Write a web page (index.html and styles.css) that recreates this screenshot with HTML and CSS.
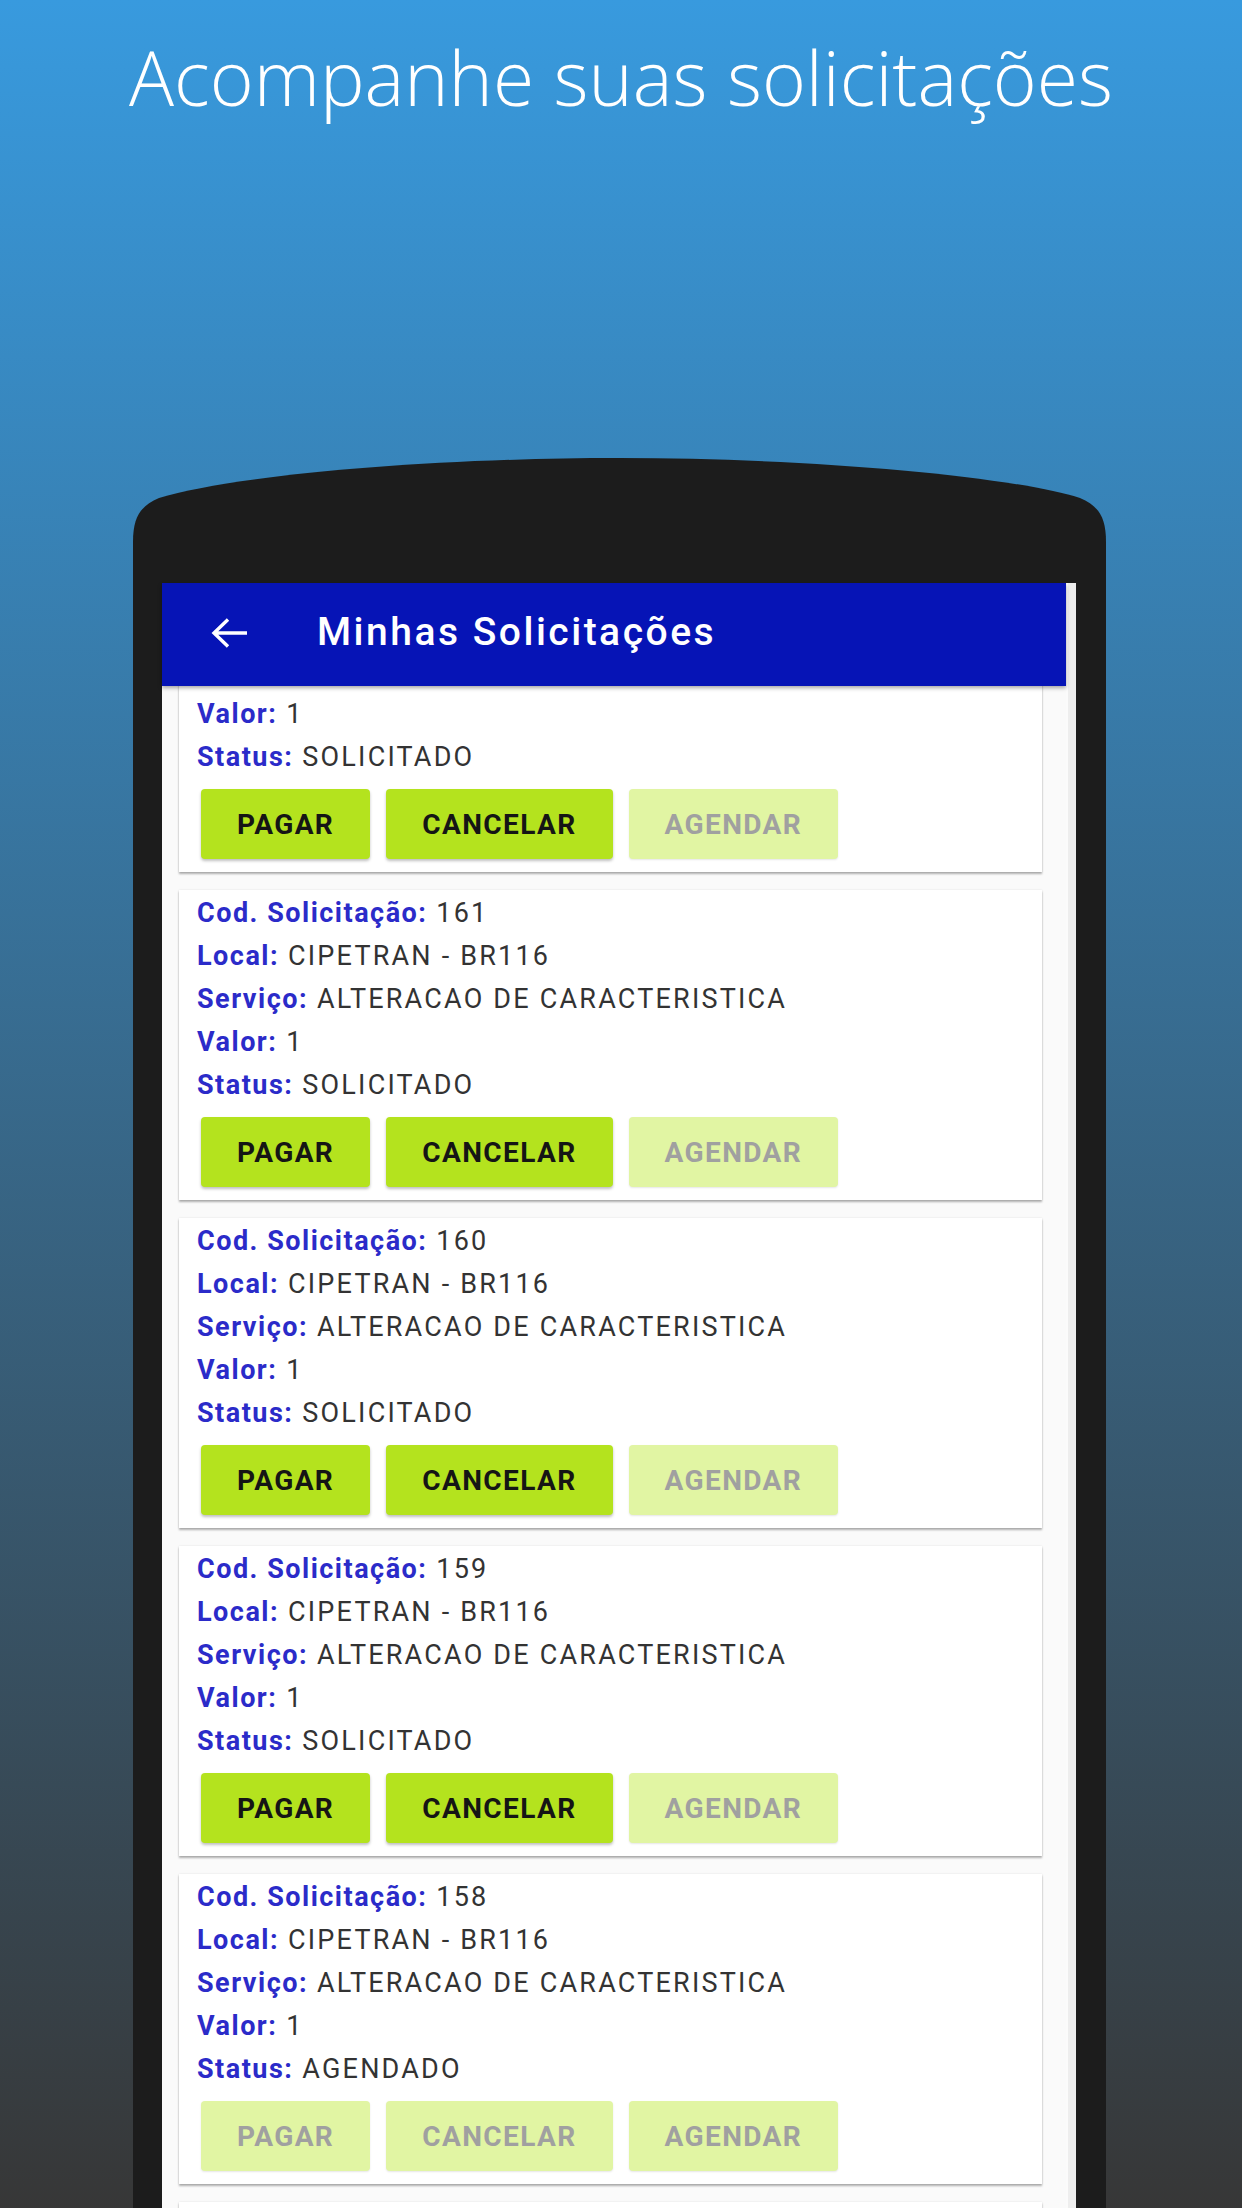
FILE: index.html
```html
<!DOCTYPE html>
<html lang="pt-BR">
<head>
<meta charset="utf-8">
<title>Acompanhe suas solicitações</title>
<link rel="stylesheet" href="styles.css">
</head>
<body>
<header class="hero"><h1 class="hero-title">Acompanhe suas solicitações</h1></header>
<div class="phone">
  <div class="screen">
    <div class="app">
      <div class="appbar">
        <svg class="back" viewBox="0 0 36 30" width="36" height="30"><path d="M3 15H36M17 1.5L3 15L17 28.5" fill="none" stroke="#fff" stroke-width="3.4"/></svg>
        <span class="appbar-title">Minhas Solicitações</span>
      </div>
      <div class="list">
        <div class="list-inner">
          <div class="card">
            <p class="row"><b class="lbl">Cod. Solicitação:</b> 162</p>
            <p class="row"><b class="lbl">Local:</b> CIPETRAN - BR116</p>
            <p class="row"><b class="lbl">Serviço:</b> ALTERACAO DE CARACTERISTICA</p>
            <p class="row"><b class="lbl">Valor:</b> 1</p>
            <p class="row"><b class="lbl">Status:</b> SOLICITADO</p>
            <div class="actions"><span class="btn">PAGAR</span><span class="btn">CANCELAR</span><span class="btn btn-off">AGENDAR</span></div>
          </div>
          <div class="card">
            <p class="row"><b class="lbl">Cod. Solicitação:</b> 161</p>
            <p class="row"><b class="lbl">Local:</b> CIPETRAN - BR116</p>
            <p class="row"><b class="lbl">Serviço:</b> ALTERACAO DE CARACTERISTICA</p>
            <p class="row"><b class="lbl">Valor:</b> 1</p>
            <p class="row"><b class="lbl">Status:</b> SOLICITADO</p>
            <div class="actions"><span class="btn">PAGAR</span><span class="btn">CANCELAR</span><span class="btn btn-off">AGENDAR</span></div>
          </div>
          <div class="card">
            <p class="row"><b class="lbl">Cod. Solicitação:</b> 160</p>
            <p class="row"><b class="lbl">Local:</b> CIPETRAN - BR116</p>
            <p class="row"><b class="lbl">Serviço:</b> ALTERACAO DE CARACTERISTICA</p>
            <p class="row"><b class="lbl">Valor:</b> 1</p>
            <p class="row"><b class="lbl">Status:</b> SOLICITADO</p>
            <div class="actions"><span class="btn">PAGAR</span><span class="btn">CANCELAR</span><span class="btn btn-off">AGENDAR</span></div>
          </div>
          <div class="card">
            <p class="row"><b class="lbl">Cod. Solicitação:</b> 159</p>
            <p class="row"><b class="lbl">Local:</b> CIPETRAN - BR116</p>
            <p class="row"><b class="lbl">Serviço:</b> ALTERACAO DE CARACTERISTICA</p>
            <p class="row"><b class="lbl">Valor:</b> 1</p>
            <p class="row"><b class="lbl">Status:</b> SOLICITADO</p>
            <div class="actions"><span class="btn">PAGAR</span><span class="btn">CANCELAR</span><span class="btn btn-off">AGENDAR</span></div>
          </div>
          <div class="card">
            <p class="row"><b class="lbl">Cod. Solicitação:</b> 158</p>
            <p class="row"><b class="lbl">Local:</b> CIPETRAN - BR116</p>
            <p class="row"><b class="lbl">Serviço:</b> ALTERACAO DE CARACTERISTICA</p>
            <p class="row"><b class="lbl">Valor:</b> 1</p>
            <p class="row"><b class="lbl">Status:</b> AGENDADO</p>
            <div class="actions"><span class="btn btn-off">PAGAR</span><span class="btn btn-off">CANCELAR</span><span class="btn btn-off">AGENDAR</span></div>
          </div>
          <div class="card">
            <p class="row"><b class="lbl">Cod. Solicitação:</b> 157</p>
            <p class="row"><b class="lbl">Local:</b> CIPETRAN - BR116</p>
            <p class="row"><b class="lbl">Serviço:</b> ALTERACAO DE CARACTERISTICA</p>
            <p class="row"><b class="lbl">Valor:</b> 1</p>
            <p class="row"><b class="lbl">Status:</b> AGENDADO</p>
            <div class="actions"><span class="btn btn-off">PAGAR</span><span class="btn btn-off">CANCELAR</span><span class="btn btn-off">AGENDAR</span></div>
          </div>
        </div>
      </div>
    </div>
    <div class="edge"></div>
  </div>
</div>
</body>
</html>
```

FILE: styles.css
```css
html, body {
  margin: 0;
  padding: 0;
}
body {
  width: 1242px;
  height: 2208px;
  overflow: hidden;
  background: linear-gradient(to bottom, #389ade 0%, #373737 100%);
  font-family: Roboto, "Noto Sans", sans-serif;
}
.hero {
  height: 458px;
  box-sizing: border-box;
  padding-top: 26px;
}
.hero-title {
  margin: 0;
  text-align: center;
  font-family: "Open Sans", "Noto Sans", sans-serif;
  font-weight: 300;
  font-size: 75px;
  line-height: 102px;
  color: #ffffff;
  letter-spacing: 0;
}
.phone {
  width: 973px;
  height: 1750px;
  margin-left: 133px;
  box-sizing: border-box;
  padding: 125px 30px 0 29px;
  background: #1c1c1c;
  clip-path: path("M0 84 C0 58 8 48 26 40 C100 17 300 0 486 0 C672 0 873 17 947 40 C965 48 973 58 973 84 L973 1750 L0 1750 Z");
}
.screen {
  height: 100%;
  display: flex;
  background: #eeeeee;
}
.app {
  width: 904px;
  display: flex;
  flex-direction: column;
  background: #fafafa;
  border-right: 2px solid #fbfbfb;
}
.edge {
  flex: 1;
}
.appbar {
  position: relative;
  z-index: 2;
  height: 103px;
  flex: none;
  display: flex;
  align-items: center;
  padding-left: 49px;
  background: #0614b6;
  box-shadow: 0 2px 4px rgba(0, 0, 0, 0.35);
}
.back {
  display: block;
  margin-top: -4px;
}
.appbar-title {
  margin-left: 70px;
  margin-top: -6px;
  color: #ffffff;
  font-weight: 500;
  font-size: 39px;
  letter-spacing: 2.5px;
}
.list {
  flex: 1;
  overflow: hidden;
}
.list-inner {
  margin-top: -124px;
  padding: 0 24px 0 17px;
  display: flex;
  flex-direction: column;
  gap: 18px;
}
.card {
  height: 310px;
  box-sizing: border-box;
  padding: 2px 18px 0;
  background: #ffffff;
  box-shadow: 0 2px 2px rgba(0, 0, 0, 0.3), 0 0 2px rgba(0, 0, 0, 0.1);
}
.row {
  margin: 0;
  font-size: 27px;
  line-height: 43px;
  letter-spacing: 2.2px;
  color: #333333;
  white-space: nowrap;
}
.lbl {
  font-weight: 700;
  color: #2b2bc9;
  letter-spacing: 1.5px;
}
.actions {
  display: flex;
  gap: 16px;
  margin-top: 10px;
  padding-left: 4px;
}
.btn {
  height: 70px;
  display: flex;
  align-items: center;
  padding: 0 36px;
  border-radius: 4px;
  background: #b4e31e;
  color: #151515;
  font-weight: 700;
  font-size: 28px;
  letter-spacing: 1.4px;
  box-shadow: 0 2px 3px rgba(0, 0, 0, 0.25);
}
.btn-off {
  background: #e1f5a3;
  color: #a0a0a0;
  box-shadow: 0 1px 2px rgba(0, 0, 0, 0.1);
}
```
